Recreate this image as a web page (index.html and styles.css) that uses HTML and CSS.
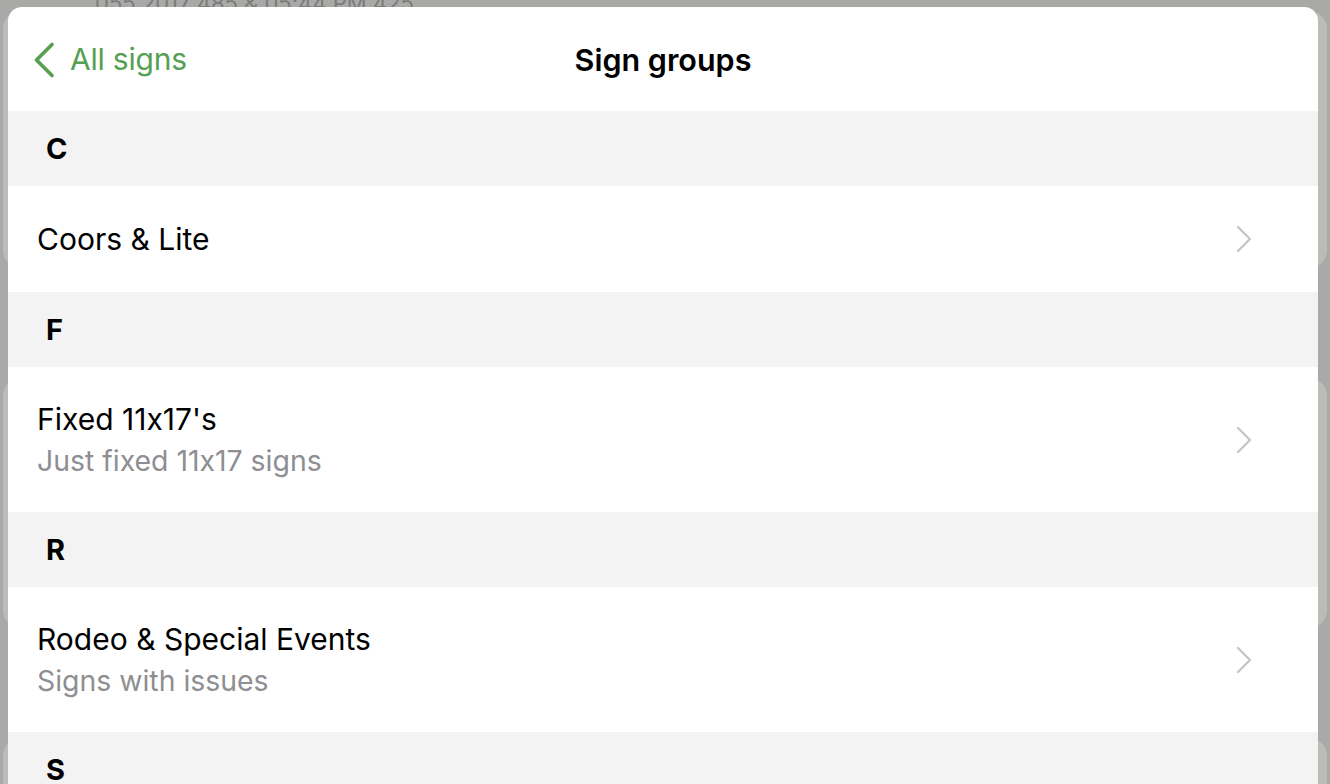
FILE: index.html
```html
<!DOCTYPE html>
<html>
<head>
<meta charset="utf-8">
<link rel="stylesheet" href="styles.css">
</head>
<body>
<div class="stage">
  <div class="backdrop">
    <div class="bg-caption">055 2017 485 &amp; 05:44 PM 425</div>
    <div class="bg-card bg-card-1"></div>
    <div class="bg-card bg-card-2"></div>
    <div class="bg-card bg-card-3"></div>
  </div>
  <div class="sheet">
    <header class="navbar">
      <div class="back">
        <svg class="back-chev" width="22" height="36" viewBox="0 0 22 36"><path d="M19 2.5 L3.5 18 L19 33.5" fill="none" stroke="currentColor" stroke-width="3.6" stroke-linecap="round" stroke-linejoin="round"/></svg>
        <span>All signs</span>
      </div>
      <h1 class="title">Sign groups</h1>
      <div class="nav-spacer"></div>
    </header>

    <div class="section-head">C</div>
    <div class="row single">
      <div class="row-text"><div class="row-title">Coors &amp; Lite</div></div>
      <svg class="chev" width="16" height="28" viewBox="0 0 16 28"><path d="M2 2 L14 14 L2 26" fill="none" stroke="currentColor" stroke-width="2.4" stroke-linecap="round" stroke-linejoin="round"/></svg>
    </div>

    <div class="section-head">F</div>
    <div class="row double">
      <div class="row-text">
        <div class="row-title">Fixed 11x17's</div>
        <div class="row-sub">Just fixed 11x17 signs</div>
      </div>
      <svg class="chev" width="16" height="28" viewBox="0 0 16 28"><path d="M2 2 L14 14 L2 26" fill="none" stroke="currentColor" stroke-width="2.4" stroke-linecap="round" stroke-linejoin="round"/></svg>
    </div>

    <div class="section-head">R</div>
    <div class="row double">
      <div class="row-text">
        <div class="row-title">Rodeo &amp; Special Events</div>
        <div class="row-sub">Signs with issues</div>
      </div>
      <svg class="chev" width="16" height="28" viewBox="0 0 16 28"><path d="M2 2 L14 14 L2 26" fill="none" stroke="currentColor" stroke-width="2.4" stroke-linecap="round" stroke-linejoin="round"/></svg>
    </div>

    <div class="section-head">S</div>
  </div>
</div>
</body>
</html>
```
FILE: styles.css
```css
html, body {
  margin: 0;
  padding: 0;
  height: 100%;
  overflow: hidden;
  background: #a9aaa8;
  font-family: Inter, "Noto Sans", "Liberation Sans", sans-serif;
  font-feature-settings: "calt" 0;
}
.stage {
  display: grid;
  width: 1330px;
  height: 784px;
  overflow: hidden;
}
.backdrop, .sheet {
  grid-area: 1 / 1;
}
.backdrop {
  display: flex;
  flex-direction: column;
  align-items: stretch;
}
.bg-caption {
  height: 7px;
  margin-left: 95px;
  font-size: 22px;
  line-height: 7px;
  color: #7b7c7a;
  overflow: hidden;
  white-space: nowrap;
}
.bg-card {
  background: #bbbcb8;
  border-radius: 18px;
  margin: 0 3px;
}
.bg-card-1 { margin-top: 4px; height: 257px; }
.bg-card-2 { margin-top: 110px; height: 250px; }
.bg-card-3 { margin-top: 110px; height: 120px; }

.sheet {
  margin: 7px 12px 0 8px;
  background: #ffffff;
  border-radius: 14px 14px 0 0;
  overflow: hidden;
  display: flex;
  flex-direction: column;
}
.navbar {
  height: 104px;
  flex: none;
  display: grid;
  grid-template-columns: 1fr auto 1fr;
  align-items: center;
  padding: 0 25px;
}
.back {
  display: flex;
  align-items: center;
  gap: 15px;
  color: #55a052;
  font-size: 30px;
  letter-spacing: -0.2px;
}
.back-chev { flex: none; margin-top: 1px; }
.title {
  margin: 0;
  font-size: 30.5px;
  font-weight: 600;
  color: #000;
}
.section-head {
  height: 75px;
  flex: none;
  background: #f3f3f3;
  display: flex;
  align-items: center;
  padding-left: 38px;
  font-size: 29px;
  font-weight: 700;
  color: #000;
}
.row {
  flex: none;
  display: flex;
  align-items: center;
  padding: 0 66px 0 29px;
  background: #fff;
}
.row.single { height: 106px; }
.row.double { height: 145px; }
.row-text { flex: 1; display: flex; flex-direction: column; }
.row-title {
  font-size: 30px;
  color: #000;
  line-height: 41px;
}
.row-sub {
  font-size: 28.4px;
  color: #8e8e93;
  line-height: 41px;
}
.chev { color: #c6c6c9; flex: none; }
```
